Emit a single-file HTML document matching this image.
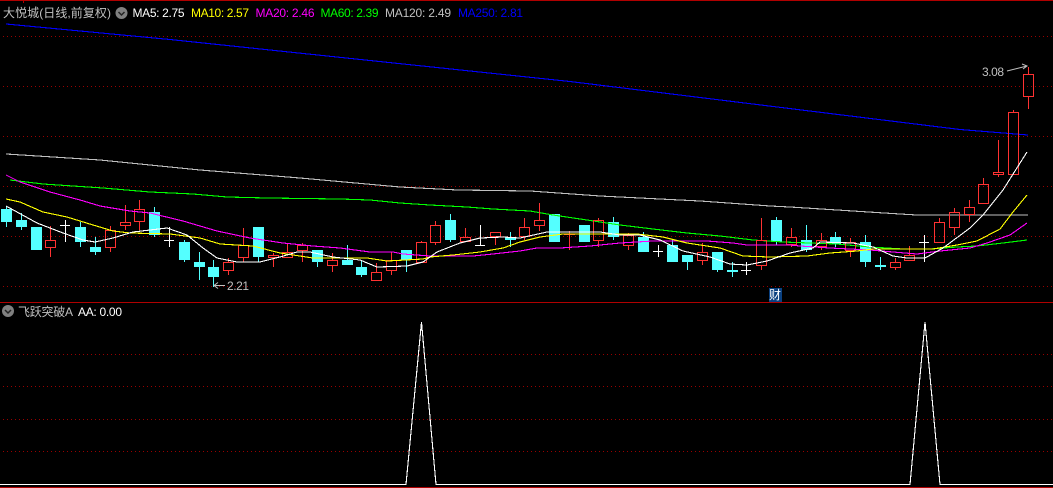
<!DOCTYPE html>
<html>
<head>
<meta charset="utf-8">
<style>
html,body{margin:0;padding:0;background:#000;width:1053px;height:488px;overflow:hidden}
svg{display:block}
text{font-family:"Liberation Sans","WenQuanYi Zen Hei","Noto Sans CJK SC",sans-serif;font-size:12px}
.c{shape-rendering:crispEdges}
.l{fill:none;stroke-width:1.1}
</style>
</head>
<body>
<svg width="1053" height="488" viewBox="0 0 1053 488" xmlns="http://www.w3.org/2000/svg">
<rect width="1053" height="488" fill="#000"/>
<g class="c" stroke="#990000" stroke-width="1" stroke-dasharray="1 3">
<path d="M3 36.500H1053M3 86.500H1053M3 136.500H1053M3 186.500H1053M3 236.500H1053M3 286.500H1053M3 354.500H1053M3 386.500H1053M3 419.500H1053M3 451.500H1053"/>
</g>
<g class="c" fill="#b00000">
<rect x="0" y="0" width="1053" height="1"/>
<rect x="23" y="0" width="1" height="3"/>
<rect x="0" y="302" width="1053" height="1"/>
<rect x="0" y="487" width="1053" height="1"/>
</g>

<!-- cyan candles -->
<g class="c" fill="#54ffff">
<path d="M6 206h1v21h-1zM21 213h1v17h-1zM80 222h1v25h-1zM95 237h1v18h-1zM154 207h1v30h-1zM184 240h1v22h-1zM199 252h1v28h-1zM213 260h1v27h-1zM258 227h1v35h-1zM317 250h1v17h-1zM347 245h1v20h-1zM361 260h1v17h-1zM406 250h1v22h-1zM450 214h1v28h-1zM510 232h1v15h-1zM613 217h1v23h-1zM643 232h1v20h-1zM672 240h1v22h-1zM687 255h1v15h-1zM717 252h1v20h-1zM732 262h1v15h-1zM776 217h1v28h-1zM806 225h1v27h-1zM835 232h1v15h-1zM865 235h1v32h-1zM880 257h1v13h-1z"/>
<rect x="1" y="209" width="11" height="13"/>
<rect x="16" y="220" width="11" height="7"/>
<rect x="31" y="227" width="11" height="23"/>
<rect x="75" y="227" width="11" height="15"/>
<rect x="90" y="247" width="11" height="5"/>
<rect x="149" y="212" width="11" height="23"/>
<rect x="179" y="242" width="11" height="18"/>
<rect x="194" y="262" width="11" height="5"/>
<rect x="208" y="267" width="11" height="10"/>
<rect x="253" y="227" width="11" height="30"/>
<rect x="312" y="250" width="11" height="12"/>
<rect x="342" y="260" width="11" height="5"/>
<rect x="356" y="267" width="11" height="8"/>
<rect x="401" y="250" width="11" height="10"/>
<rect x="445" y="220" width="11" height="20"/>
<rect x="505" y="237" width="11" height="3"/>
<rect x="549" y="214" width="11" height="28"/>
<rect x="579" y="225" width="11" height="17"/>
<rect x="608" y="222" width="11" height="15"/>
<rect x="638" y="237" width="11" height="15"/>
<rect x="667" y="245" width="11" height="17"/>
<rect x="682" y="255" width="11" height="7"/>
<rect x="712" y="252" width="11" height="18"/>
<rect x="727" y="270" width="11" height="2"/>
<rect x="771" y="220" width="11" height="22"/>
<rect x="801" y="240" width="11" height="10"/>
<rect x="830" y="237" width="11" height="7"/>
<rect x="860" y="242" width="11" height="20"/>
<rect x="875" y="265" width="11" height="2"/>
</g>

<!-- white crosses -->
<g class="c" stroke="#fff" fill="none">
<path d="M60 225.500h10M65.500 220v22M164 240.500h10M169.500 227v20M475 245.500h10M480.500 225v21M653 251.500h10M658.500 245v12M741 270.500h10M746.500 262v13M919 242.500h10M924.500 235v27"/>
</g>

<!-- MA lines -->
<g class="l c">
<polyline stroke="#0000ff" points="6,24 170,39.500 570,81.500 960,129.500 1028,135"/>
<polyline stroke="#c0c0c0" points="6,154 100,160 200,170 300,178 400,187 458,190 530,191 600,196 700,201 770,206 790,207 900,214 917,215 1028,215"/>
<polyline stroke="#00ff00" points="10,180 43,184 73,186 103,188 150,192 193,194 227,197 267,198 340,199 370,200 400,203 430,205 467,207 493,209 530,211 553,215 587,220 620,225 653,229 687,233 720,236 753,240 783,242 837,244 870,247 903,249 930,249 957,247 977,246 1003,243 1027,240"/>
</g>

<!-- red candles -->
<g class="c" fill="none" stroke="#ff3232">
<path d="M50.500 226v14M50.500 248v9M110.500 226v4M110.500 248v4M125.500 205v17M125.500 226v4M139.500 200v9M139.500 222v8M228.500 258v4M228.500 271v4M243.500 228v17M243.500 258v4M273.500 253v2M273.500 258v9M287.500 243v9M302.500 243v2M302.500 251v11M332.500 253v7M332.500 266v6M376.500 263v9M391.500 252v8M391.500 271v4M421.500 241v1M435.500 221v4M435.500 243v2M465.500 228v9M495.500 237v8M524.500 218v9M524.500 237v3M539.500 203v17M539.500 226v5M569.500 231v19M598.500 218v2M598.500 241v6M628.500 233v2M628.500 246v4M702.500 243v9M702.500 261v4M761.500 218v22M761.500 266v4M791.500 228v9M791.500 245v2M821.500 233v7M821.500 247v3M850.500 238v4M850.500 251v6M895.500 258v4M895.500 268v2M909.500 246v9M939.500 218v4M954.500 208v4M954.500 228v7M969.500 200v7M969.500 215v7M983.500 178v6M998.500 140v32M998.500 174v3M1013.500 110v2M1028.500 67v7M1028.500 97v12"/>
<rect x="45.500" y="240.500" width="10" height="7"/>
<rect x="105.500" y="230.500" width="10" height="17"/>
<rect x="120.500" y="222.500" width="10" height="3"/>
<rect x="134.500" y="209.500" width="10" height="12"/>
<rect x="223.500" y="262.500" width="10" height="8"/>
<rect x="238.500" y="245.500" width="10" height="12"/>
<rect x="268.500" y="255.500" width="10" height="2"/>
<rect x="282.500" y="252.500" width="10" height="5"/>
<rect x="297.500" y="245.500" width="10" height="5"/>
<rect x="327.500" y="260.500" width="10" height="5"/>
<rect x="371.500" y="272.500" width="10" height="8"/>
<rect x="386.500" y="260.500" width="10" height="10"/>
<rect x="416.500" y="242.500" width="10" height="20"/>
<rect x="430.500" y="225.500" width="10" height="17"/>
<rect x="460.500" y="237.500" width="10" height="4"/>
<rect x="490.500" y="232.500" width="10" height="4"/>
<rect x="519.500" y="227.500" width="10" height="9"/>
<rect x="534.500" y="220.500" width="10" height="5"/>
<path d="M564 234.500h11"/>
<rect x="593.500" y="220.500" width="10" height="20"/>
<rect x="623.500" y="235.500" width="10" height="10"/>
<rect x="697.500" y="252.500" width="10" height="8"/>
<rect x="756.500" y="240.500" width="10" height="25"/>
<rect x="786.500" y="237.500" width="10" height="7"/>
<rect x="816.500" y="240.500" width="10" height="6"/>
<rect x="845.500" y="242.500" width="10" height="8"/>
<rect x="890.500" y="262.500" width="10" height="5"/>
<rect x="904.500" y="255.500" width="10" height="5"/>
<rect x="934.500" y="222.500" width="10" height="20"/>
<rect x="949.500" y="212.500" width="10" height="15"/>
<rect x="964.500" y="207.500" width="10" height="7"/>
<rect x="978.500" y="184.500" width="10" height="19"/>
<rect x="993.500" y="172.500" width="10" height="2"/>
<rect x="1008.500" y="112.500" width="10" height="62"/>
<rect x="1023.500" y="74.500" width="10" height="22"/>
</g>

<g class="l c">
<polyline stroke="#ff00ff" points="6,175 20,182 50,192 80,200 100,206 130,211 150,213 183,221 217,231 250,238 283,243 313,246 340,248 370,252 393,252 403,254 430,256 473,256 493,254 520,251 537,248 560,248 590,246 620,243 653,241 707,241 733,243 747,245 790,245 800,246 830,248 870,250 893,252 917,254 940,251 970,248 987,243 1010,235 1027,223"/>
<polyline stroke="#ffff00" points="6,199 20,202 43,212 67,217 93,225 113,231 130,233 170,234 200,238 220,244 253,246 280,253 313,258 367,258 387,261 423,259 430,257 453,255 480,252 503,248 520,242 540,237 563,234 637,234 663,237 687,243 720,248 743,256 770,257 807,256 830,253 857,251 873,249 933,249 957,245 977,241 1000,229 1013,212 1027,195"/>
<polyline stroke="#ffffff" points="6,206 17,212 37,223 63,233 83,240 95,242 113,238 133,232 167,228 187,235 203,248 217,258 237,262 260,262 280,257 297,252 310,252 333,257 360,260 377,267 407,266 423,262 437,252 460,243 480,238 503,237 520,238 547,232 577,232 600,232 620,235 640,235 660,240 683,251 710,257 730,264 747,265 767,261 790,253 813,248 820,242 853,243 873,247 893,256 907,258 925,258 943,248 970,228 983,215 1003,190 1027,152"/>
</g>

<!-- bottom indicator -->
<polyline class="c l" stroke="#ffffff" points="0,484.500 406,484.500 421.500,322 436,484.500 910,484.500 925,322 940,484.500 1053,484.500"/>

<!-- header -->
<text x="3" y="17" fill="#c0c0c0" textLength="108">大悦城(日线,前复权)</text>
<circle cx="121.500" cy="13" r="6" fill="#808080"/>
<path d="M118.500 12l3 3 3-3" fill="none" stroke="#222" stroke-width="1.500"/>
<text x="132.500" y="17" fill="#ffffff" textLength="52">MA5: 2.75</text>
<text x="191" y="17" fill="#ffff00" textLength="58">MA10: 2.57</text>
<text x="255.500" y="17" fill="#ff00ff" textLength="59">MA20: 2.46</text>
<text x="320.500" y="17" fill="#00ff00" textLength="58">MA60: 2.39</text>
<text x="385" y="17" fill="#c0c0c0" textLength="66">MA120: 2.49</text>
<text x="458" y="17" fill="#0000ff" textLength="65">MA250: 2.81</text>

<!-- price labels -->
<text x="982" y="76" fill="#c0c0c0" textLength="22">3.08</text>
<path d="M1007 71L1027 66M1022 64l5 2-4 3" fill="none" stroke="#c0c0c0"/>
<text x="227" y="290" fill="#c0c0c0" textLength="22">2.21</text>
<path d="M225 285.500H214M218 282.500l-4 3 4 3" fill="none" stroke="#c0c0c0"/>

<!-- badge -->
<rect x="769" y="288" width="13" height="14" fill="#0a4080"/>
<text x="769" y="299" fill="#ffffff">财</text>

<!-- sub header -->
<circle cx="8" cy="311" r="6" fill="#808080"/>
<path d="M5 310l3 3 3-3" fill="none" stroke="#222" stroke-width="1.500"/>
<text x="18" y="316" fill="#c0c0c0" textLength="55">飞跃突破A</text>
<text x="78" y="316" fill="#ffffff" textLength="44">AA: 0.00</text>
</svg>
</body>
</html>
